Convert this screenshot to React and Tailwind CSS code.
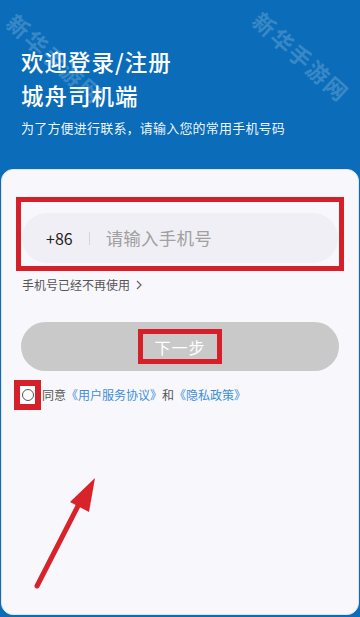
import React from 'react';

const Watermark = ({ className }) => (
  <div
    className={`absolute pointer-events-none select-none text-[22px] font-bold tracking-[2px] text-white/20 rotate-[42deg] origin-top-left whitespace-nowrap ${className}`}
  >
    新华手游网
  </div>
);

const App = () => {
  return (
    <div
      className="relative w-[360px] h-[617px] overflow-hidden bg-[#0b6dba] flex flex-col"
      style={{ fontFamily: '"Noto Sans CJK SC", "Noto Sans", sans-serif' }}
    >
      {/* header */}
      <div className="px-[21px] pt-[44px] text-white h-[169px] shrink-0">
        <h1 className="text-[22.5px] leading-[34px] font-medium tracking-[1px]">欢迎登录/注册</h1>
        <h2 className="text-[22.5px] leading-[34px] font-medium tracking-[1px]">城舟司机端</h2>
        <p className="mt-[8px] text-[13px] leading-[16px] text-white/95 tracking-[0.2px]">为了方便进行联系，请输入您的常用手机号码</p>
      </div>

      {/* card */}
      <div className="flex-1 mx-px mb-[2px] bg-[#f8f7fc] rounded-[12px] border border-[#e2e2ea] flex flex-col">
        {/* phone input */}
        <div className="mt-[27px] mx-[14px] border-[5px] border-[#d52029] pt-[11px] pb-[3px] px-px">
          <div className="h-[50px] rounded-full bg-[#f0eff5] flex items-center pl-[24px]">
            <span className="text-[16px] text-[#222]">+86</span>
            <span className="ml-[16px] w-px h-[13px] bg-[#d6d6d6]" />
            <span className="ml-[16px] text-[17.5px] text-[#a0a0a0] tracking-[0.2px]">请输入手机号</span>
          </div>
        </div>

        <div className="mt-[5px] ml-[20px] flex items-center gap-[6px] text-[12px] text-[#555] leading-[18px]">
          <span>手机号已经不再使用</span>
          <svg width="6" height="10" viewBox="0 0 6 10" fill="none" stroke="#666" strokeWidth="1.2">
            <path d="M1 1l4 4-4 4" />
          </svg>
        </div>

        {/* next button */}
        <div className="mt-[28px] mx-[19px] h-[49px] rounded-full bg-[#c9c9c9] flex items-center justify-center">
          <div className="border-[5px] border-[#d52029] w-[84px] h-[35px] flex items-center justify-center">
            <span className="text-[16px] text-white tracking-[1px]">下一步</span>
          </div>
        </div>

        {/* agreement */}
        <div className="mt-[9px] ml-[12px] flex items-center text-[12px] leading-[18px]">
          <div className="w-[27px] h-[30px] border-[6px] border-[#d52029] flex items-center justify-center bg-white">
            <span className="w-[12px] h-[12px] rounded-full border-[1.5px] border-[#555]" />
          </div>
          <span className="ml-px text-[#555]">同意</span>
          <span className="text-[#3b8fd8]">《用户服务协议》</span>
          <span className="text-[#555]">和</span>
          <span className="text-[#3b8fd8]">《隐私政策》</span>
        </div>
      </div>

      {/* annotation arrow */}
      <svg className="absolute left-0 top-0 pointer-events-none" width="360" height="617" viewBox="0 0 360 617">
        <line x1="37" y1="586" x2="80" y2="502" stroke="#d8232b" strokeWidth="5" strokeLinecap="round" />
        <polygon points="95,478 70,502 89,512" fill="#d8232b" />
      </svg>

      {/* watermarks */}
      <Watermark className="left-[22px] top-[6px]" />
      <Watermark className="left-[268px] top-[4px]" />
    </div>
  );
};

export default App;
